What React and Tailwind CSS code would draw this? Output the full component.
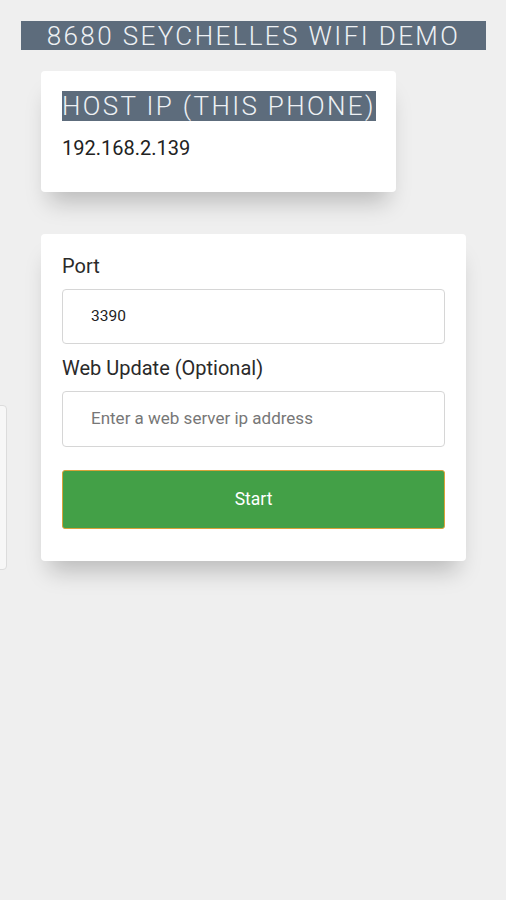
import React from "react";

export default function App() {
  return (
    <div className="relative min-h-[900px] w-full overflow-hidden bg-[#efefef]" style={{ fontFamily: "Roboto, 'Noto Sans', sans-serif" }}>
      <div className="absolute left-[-12px] top-[405px] h-[165px] w-[19px] rounded-[4px] border border-[#dcdcdc] bg-[#f7f7f7]"></div>
      <div className="pt-[21px] pl-[21px] pr-[20px]">
        <div className="flex h-[29px] items-center justify-center whitespace-nowrap bg-[#5d6c7c] text-[26px] font-light leading-none tracking-[2.4px] text-[#eef1f4]">
          8680 SEYCHELLES WIFI DEMO
        </div>
      </div>
      <div className="ml-[41px] mt-[21px] h-[121px] w-[355px] rounded-[4px] bg-white px-[21px] pt-[20px] shadow-[0_18px_22px_-8px_rgba(0,0,0,0.22)]">
        <div className="whitespace-nowrap">
          <span className="inline-block h-[30px] bg-[#5d6c7c] text-[26px] font-light leading-[31px] tracking-[2.35px] text-[#eef1f4]">HOST IP (THIS PHONE)</span>
        </div>
        <div className="mt-[14px] text-[20px] leading-[24px] text-[#222]">192.168.2.139</div>
      </div>
      <div className="ml-[41px] mt-[42px] w-[425px] rounded-[4px] bg-white px-[21px] pt-[21px] pb-[32px] shadow-[0_18px_22px_-8px_rgba(0,0,0,0.22)]">
        <div className="text-[20px] leading-[22px] text-[#2a2a2a]">Port</div>
        <div className="mt-[12px] flex h-[55px] items-center rounded-[4px] border border-[#d6d6d6] bg-white pl-[28px] text-[15.5px] text-[#222]">3390</div>
        <div className="mt-[13px] text-[20px] leading-[22px] text-[#2a2a2a]">Web Update (Optional)</div>
        <div className="mt-[12px] flex h-[56px] items-center rounded-[4px] border border-[#d6d6d6] bg-white pl-[28px] text-[17px] text-[#777]">Enter a web server ip address</div>
        <div className="mt-[23px] flex h-[59px] items-center justify-center rounded-[3px] border border-[#d9a23a] bg-[#43a047] text-[17.5px] text-white">Start</div>
      </div>
    </div>
  );
}
